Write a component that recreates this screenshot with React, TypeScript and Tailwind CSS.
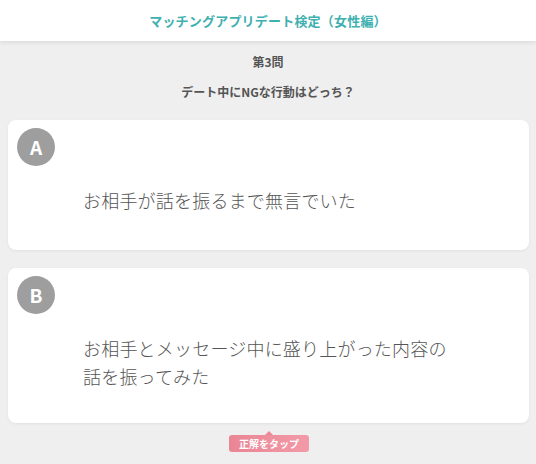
const font = { fontFamily: '"Noto Sans CJK JP", "Noto Sans", sans-serif' };

const choices = [
  { label: "A", lines: ["お相手が話を振るまで無言でいた"], pad: "pb-[36px]" },
  { label: "B", lines: ["お相手とメッセージ中に盛り上がった内容の", "話を振ってみた"], pad: "pb-[33px]" },
];

const App = () => {
  return (
    <div style={font} className="w-[536px] h-[464px] overflow-hidden bg-[#efefef] text-[#555]">
      <header className="h-[41px] bg-white flex items-center justify-center shadow-[0_2px_4px_rgba(0,0,0,0.08)] relative">
        <h1 className="text-[13px] font-bold text-[#3fb0b0] tracking-[0.2px]">マッチングアプリデート検定（女性編）</h1>
      </header>

      <div className="flex flex-col items-center pt-[12px]">
        <p className="text-[12px] font-bold leading-[18px]">第3問</p>
        <p className="text-[12px] font-bold leading-[18px] mt-[12px]">デート中にNGな行動はどっち？</p>
      </div>

      <div className="flex flex-col gap-[18px] px-[8px] mt-[19px] mr-[-1px]">
        {choices.map((c) => (
          <div key={c.label} className={`bg-white rounded-[8px] shadow-[0_1px_3px_rgba(0,0,0,0.06)] pt-[8px] pl-[9px] ${c.pad}`}>
            <div className="w-[38px] h-[38px] rounded-full bg-[#9e9e9e] flex items-center justify-center text-white text-[19px] font-bold">
              {c.label}
            </div>
            <p className="mt-[20px] pl-[66px] text-[18px] leading-[28px] font-light text-[#555] tracking-[0.2px]">
              {c.lines.map((l, i) => (
                <span key={i} className="block">{l}</span>
              ))}
            </p>
          </div>
        ))}
      </div>

      <div className="flex justify-center mt-[12px]">
        <div className="relative ml-[2px]">
          <div className="absolute left-1/2 -translate-x-1/2 -top-[4px] w-0 h-0 border-l-[4px] border-r-[4px] border-b-[4px] border-l-transparent border-r-transparent border-b-[#ec8896]" />
          <div className="bg-gradient-to-r from-[#ea8594] to-[#f29aa8] text-white text-[10px] font-bold leading-[17px] px-[10px] rounded-[3px]">
            正解をタップ
          </div>
        </div>
      </div>
    </div>
  );
};

export default App;
